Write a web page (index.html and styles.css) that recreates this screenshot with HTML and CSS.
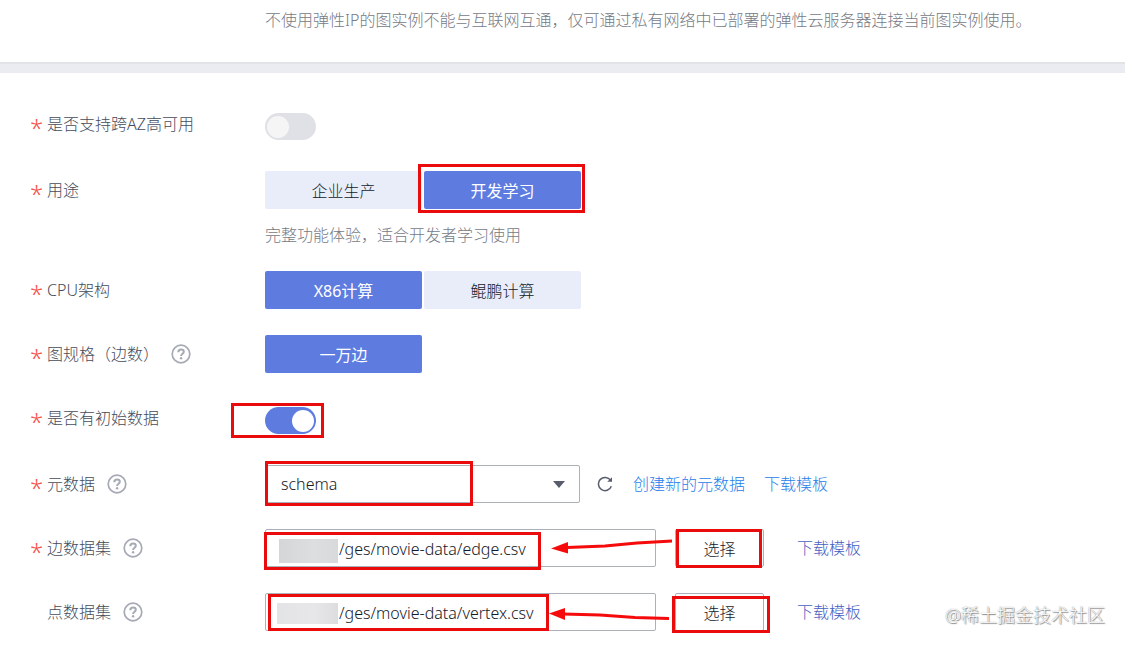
FILE: index.html
```html
<!DOCTYPE html>
<html lang="zh-CN">
<head>
  <meta charset="UTF-8">
  <meta name="viewport" content="width=device-width, initial-scale=1.0">
  <title>创建图</title>
  <link rel="stylesheet" href="styles.css">
</head>
<body>

  <!-- Icons -->
  <svg class="sprite" aria-hidden="true">
    <symbol id="icon-help" viewBox="0 0 20 20">
      <circle cx="10" cy="10" r="8.8" fill="none" stroke="currentColor" stroke-width="1.7"/>
      <path d="M7.3 8.2c0-1.7 1.2-2.7 2.8-2.7s2.7 1 2.7 2.300c0 1.900-2.700 2-2.700 4.100" fill="none" stroke="currentColor" stroke-width="2"/>
      <circle cx="10.1" cy="14.3" r="1.2" fill="currentColor"/>
    </symbol>
  </svg>

  <section class="network">
    <p class="hint">不使用弹性IP的图实例不能与互联网互通，仅可通过私有网络中已部署的弹性云服务器连接当前图实例使用。</p>
  </section>

  <form class="form">
    <div class="form-row switch-row">
      <div class="form-label"><span class="required">*</span><label for="cross-az">是否支持跨AZ高可用</label></div>
      <div class="form-control">
        <input type="checkbox" id="cross-az" class="switch">
      </div>
    </div>

    <div class="form-row">
      <div class="form-label"><span class="required">*</span><span>用途</span></div>
      <div class="form-control stacked">
        <div class="segments">
          <button type="button" class="segment">企业生产</button>
          <div class="marked">
            <button type="button" class="segment active">开发学习</button>
            <span class="mark mark-usage"></span>
          </div>
        </div>
        <p class="hint">完整功能体验，适合开发者学习使用</p>
      </div>
    </div>

    <div class="form-row">
      <div class="form-label"><span class="required">*</span><span>CPU架构</span></div>
      <div class="form-control segments">
        <button type="button" class="segment active">X86计算</button>
        <button type="button" class="segment">鲲鹏计算</button>
      </div>
    </div>

    <div class="form-row">
      <div class="form-label">
        <span class="required">*</span><span>图规格（边数）</span>
        <svg class="help"><use href="#icon-help"/></svg>
      </div>
      <div class="form-control segments">
        <button type="button" class="segment active">一万边</button>
      </div>
    </div>

    <div class="form-row switch-row">
      <div class="form-label"><span class="required">*</span><label for="init-data">是否有初始数据</label></div>
      <div class="form-control">
        <div class="marked">
          <input type="checkbox" id="init-data" class="switch" checked>
          <span class="mark mark-switch"></span>
        </div>
      </div>
    </div>

    <div class="form-row">
      <div class="form-label">
        <span class="required">*</span><label for="schema">元数据</label>
        <svg class="help"><use href="#icon-help"/></svg>
      </div>
      <div class="form-control">
        <div class="marked">
          <select id="schema" class="field select">
            <option>schema</option>
          </select>
          <svg class="caret" viewBox="0 0 12 7"><path d="M0 0h12L6 7z" fill="#575d6c"/></svg>
          <span class="mark mark-schema"></span>
        </div>
        <button type="button" class="refresh" aria-label="刷新">
          <svg viewBox="0 0 16 16">
            <path d="M13.6 4.4A6.6 6.6 0 1 0 14.3 10.2" fill="none" stroke="#575d6c" stroke-width="1.5"/>
            <path d="M15 1.200v4.600H10.200z" fill="#575d6c"/>
          </svg>
        </button>
        <a href="#" class="link bright">创建新的元数据</a>
        <a href="#" class="link bright">下载模板</a>
      </div>
    </div>

    <div class="form-row">
      <div class="form-label">
        <span class="required">*</span><label for="edge-set">边数据集</label>
        <svg class="help"><use href="#icon-help"/></svg>
      </div>
      <div class="form-control">
        <div class="marked">
          <input type="text" id="edge-set" class="field path" value="/ges/movie-data/edge.csv">
          <span class="mask mask-edge"></span>
          <span class="mark mark-edge"></span>
          <svg class="arrow" viewBox="0 0 410 38">
            <path d="M302 18.5L340 17L372 14L407 12" fill="none" stroke="#f50b0b" stroke-width="3"/>
            <path d="M286 19.5L303 13V24.5z" fill="#f50b0b"/>
          </svg>
        </div>
        <div class="marked pick">
          <button type="button" class="choose">选择</button>
          <span class="mark mark-pick-edge"></span>
        </div>
        <a href="#" class="link">下载模板</a>
      </div>
    </div>

    <div class="form-row">
      <div class="form-label">
        <span class="required"></span><label for="vertex-set">点数据集</label>
        <svg class="help"><use href="#icon-help"/></svg>
      </div>
      <div class="form-control">
        <div class="marked">
          <input type="text" id="vertex-set" class="field path" value="/ges/movie-data/vertex.csv">
          <span class="mask mask-vertex"></span>
          <span class="mark mark-vertex"></span>
          <svg class="arrow" viewBox="0 0 410 38">
            <path d="M298 21L335 22L370 24.5L404 25.5" fill="none" stroke="#f50b0b" stroke-width="3"/>
            <path d="M284 20.5L300 15V27z" fill="#f50b0b"/>
          </svg>
        </div>
        <div class="marked pick">
          <button type="button" class="choose">选择</button>
          <span class="mark mark-pick-vertex"></span>
        </div>
        <a href="#" class="link">下载模板</a>
      </div>
    </div>
  </form>

  <div class="watermark">@稀土掘金技术社区</div>

</body>
</html>
```
FILE: styles.css
```css
* {
  margin: 0;
  padding: 0;
  box-sizing: border-box;
}

body {
  position: relative;
  font-family: "Noto Sans", "Noto Sans CJK SC", sans-serif;
  font-size: 16px;
  font-weight: 300;
  line-height: 24px;
  color: #464c5a;
  background-color: #fff;
}

button,
input,
select {
  font: inherit;
}

.sprite {
  display: none;
}

.network {
  padding: 8px 0 30px 265px;
  border-bottom: 2px solid #e2e3e7;
}

.hint {
  color: #767a85;
}

.form {
  display: flex;
  flex-direction: column;
  gap: 26px;
  padding: 32px 30px 14px;
  border-top: 9px solid #ebecf1;
}

.form-row {
  display: grid;
  grid-template-columns: 235px 1fr;
  align-items: start;
  min-height: 38px;
}

.form-row.switch-row {
  min-height: 40px;
}

.form-label {
  display: flex;
  align-items: center;
  height: 38px;
}

.required {
  width: 17px;
  height: 24px;
  padding-top: 4px;
  font-size: 24px;
  color: #f5504a;
}

.help {
  width: 20px;
  height: 20px;
  margin-left: 12px;
  color: #a6aab5;
}

.form-control {
  display: flex;
  min-height: 38px;
}

.form-control.stacked {
  flex-direction: column;
  gap: 16px;
}

.stacked .hint {
  line-height: 20px;
}

/* Segmented buttons */
.segments {
  display: flex;
  gap: 2px;
}

.segment {
  width: 157px;
  height: 38px;
  padding-top: 2px;
  border: none;
  border-radius: 2px;
  background-color: #e9edfa;
  color: #151a28;
  cursor: pointer;
}

.segment.active {
  background-color: #5e7ce0;
  font-weight: 400;
  color: #fff;
}

/* Switch */
.switch {
  appearance: none;
  display: block;
  width: 51px;
  height: 27px;
  margin-top: 8px;
  padding: 3px 2px;
  border-radius: 14px;
  background-color: #dfe1e6;
  cursor: pointer;
}

.switch::before {
  content: "";
  display: block;
  width: 22px;
  height: 22px;
  border-radius: 50%;
  background-color: #f5f5f6;
}

.switch:checked {
  background-color: #5e7ce0;
}

.switch:checked::before {
  margin-left: auto;
  background-color: #fff;
}

/* Fields */
.field {
  display: block;
  height: 38px;
  border: 1px solid #adb0b8;
  border-radius: 2px;
  background-color: #fff;
  color: #151a28;
}

.select {
  appearance: none;
  width: 315px;
  padding: 0 15px;
}

.path {
  width: 391px;
  padding-top: 2px;
  padding-left: 73px;
}

.caret {
  position: absolute;
  top: 16px;
  right: 15px;
  width: 12px;
  height: 7px;
  pointer-events: none;
}

.refresh {
  width: 16px;
  height: 38px;
  margin: 0 1px 0 17px;
  border: none;
  background: none;
  cursor: pointer;
}

.refresh svg {
  display: block;
  width: 16px;
  height: 16px;
}

.choose {
  display: block;
  width: 89px;
  height: 38px;
  padding-top: 2px;
  border: 1px solid #adb0b8;
  border-radius: 2px;
  background-color: #fff;
  color: #151a28;
  cursor: pointer;
}

.pick {
  margin: 0 14px 0 19px;
}

.link {
  margin-left: 19px;
  line-height: 38px;
  color: #4560c0;
  text-decoration: none;
}

.link.bright {
  color: #2680ea;
}

/* Red marks drawn over the form */
.marked {
  position: relative;
}

.mark {
  position: absolute;
  border: 3px solid #ea0c0c;
  pointer-events: none;
}

.mark-usage {
  top: -7px;
  left: -6px;
  width: 167px;
  height: 49px;
}

.mark-switch {
  top: 4px;
  left: -34px;
  width: 93px;
  height: 35px;
}

.mark-schema {
  top: -4px;
  left: 0;
  width: 208px;
  height: 45px;
}

.mark-edge {
  top: 3px;
  left: -1px;
  width: 277px;
  height: 38px;
}

.mark-vertex {
  top: 1px;
  left: 3px;
  width: 281px;
  height: 37px;
}

.mark-pick-edge {
  top: 0;
  left: 1px;
  width: 86px;
  height: 39px;
}

.mark-pick-vertex {
  top: 3px;
  left: -3px;
  width: 98px;
  height: 37px;
}

.arrow {
  position: absolute;
  top: 0;
  left: 0;
  z-index: 1;
  width: 410px;
  height: 38px;
  pointer-events: none;
}

.mask {
  position: absolute;
  top: 10px;
  left: 14px;
  width: 59px;
  height: 24px;
  background: linear-gradient(90deg, #d5d6d8, #dddee0 60%, #d8d9db);
}

.mask-vertex {
  left: 12px;
  width: 61px;
  height: 21px;
  background: linear-gradient(90deg, #e3e4e6, #e7e7e9 60%, #dcdddf);
}

.watermark {
  position: absolute;
  right: 20px;
  bottom: 18px;
  font-size: 18px;
  color: #fff;
  text-shadow: 0 0 1px #777, 1px 1px 1px #888;
}
```
